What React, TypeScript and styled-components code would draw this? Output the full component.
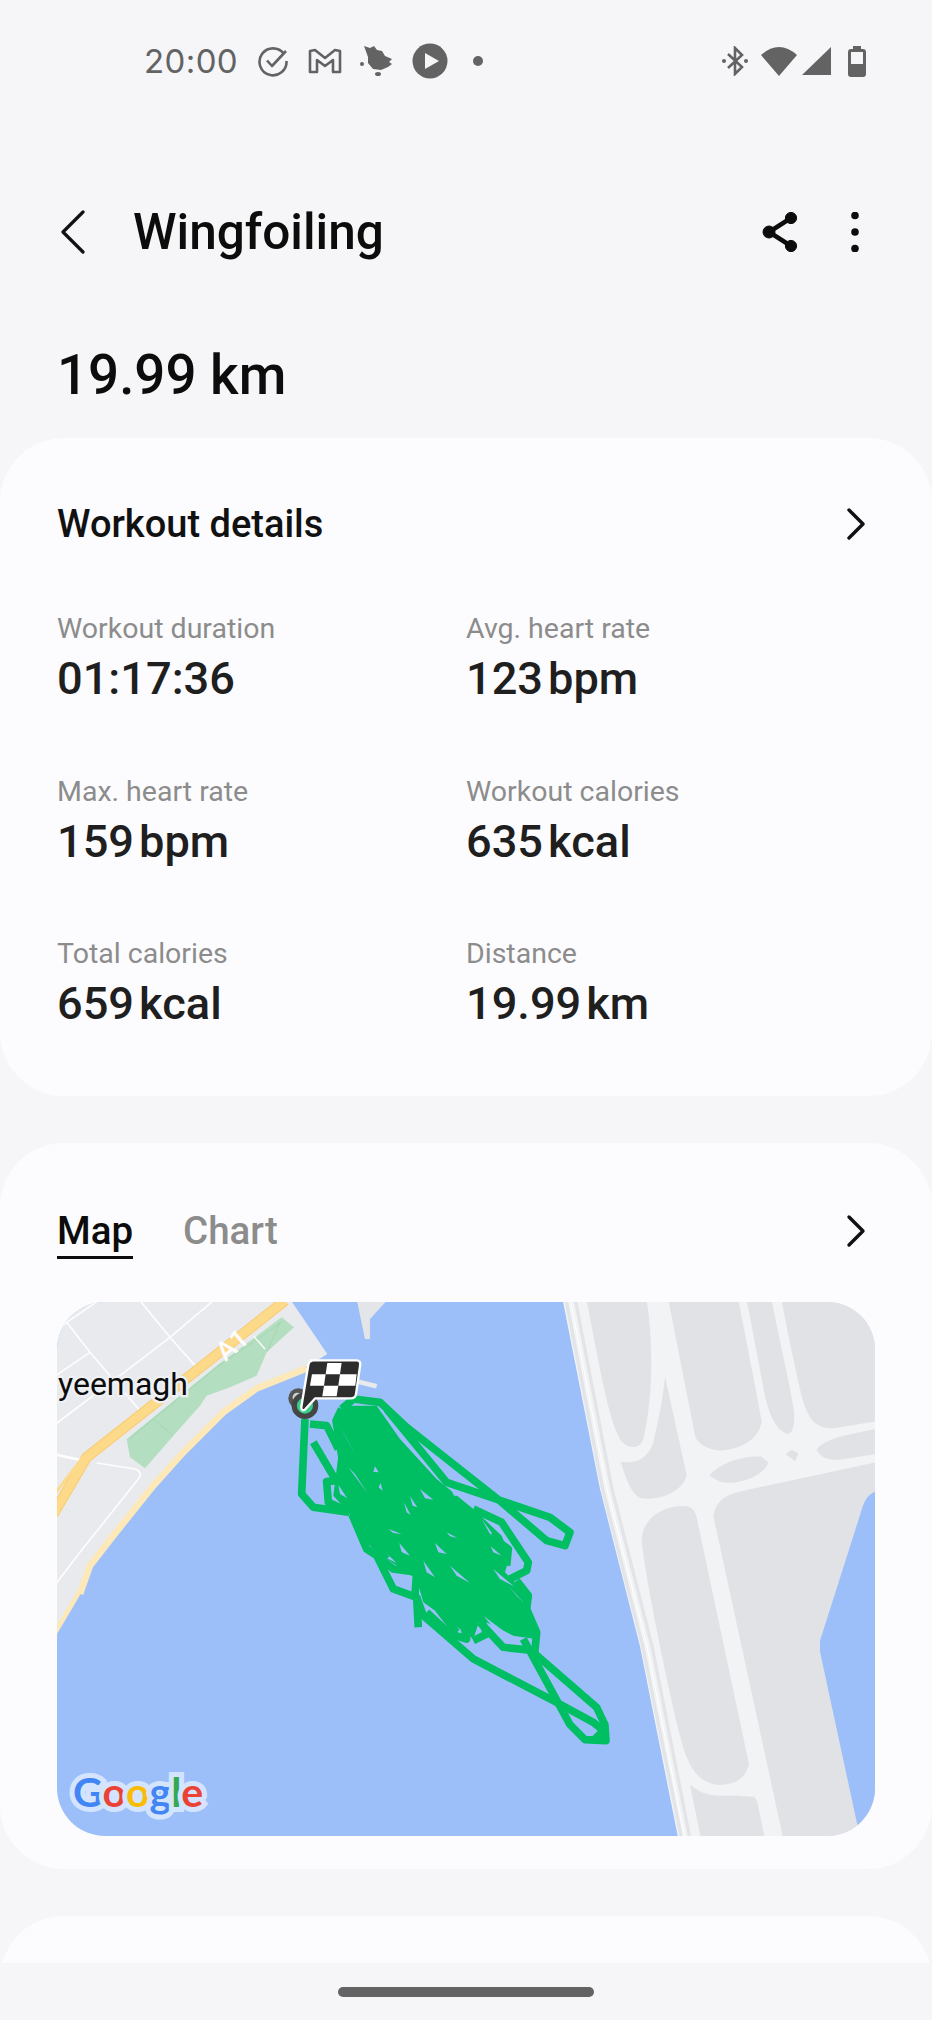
import React from "react";
import styled, { createGlobalStyle } from "styled-components";

const Global = createGlobalStyle`
  html, body { margin: 0; padding: 0; background: #f6f6f8; }
  body { font-family: Roboto, "Liberation Sans", sans-serif; }
`;

const Page = styled.div`
  width: 932px;
  height: 2020px;
  background: #f6f6f8;
  overflow: hidden;
  display: flex;
  flex-direction: column;
`;
const Scroll = styled.main`
  height: 1963px;
  overflow: hidden;
  flex: none;
`;
const StatusBar = styled.div`
  height: 122px;
  display: flex;
  align-items: center;
  justify-content: space-between;
  padding: 0 66px 0 144px;
  color: #636363;
`;
const StatusGroup = styled.div`
  display: flex;
  align-items: center;
`;
const Clock = styled.span`
  font-family: Inter, sans-serif;
  font-size: 33px;
  letter-spacing: 0.4px;
  color: #636363;
  margin-right: 19px;
`;
const Header = styled.header`
  margin-top: 68px;
  height: 84px;
  display: flex;
  align-items: center;
  padding: 0 72px 0 60px;
`;
const Title = styled.h1`
  margin: 0 0 0 47px;
  flex: 1;
  font-size: 49.5px;
  font-weight: 500;
  color: #0c0c0c;
`;
const HeaderActions = styled.div`
  display: flex;
  align-items: center;
  gap: 52px;
`;
const Distance = styled.div`
  margin: 69px 0 0 57px;
  height: 64px;
  line-height: 64px;
  font-size: 54.7px;
  font-weight: 500;
  color: #0c0c0c;
`;
const Card = styled.section<{ $h: number }>`
  background: #fcfcfe;
  border-radius: 64px;
  height: ${(p) => p.$h}px;
  padding: 0 57px;
  box-sizing: border-box;
  margin-top: 47px;
`;
const FirstCard = styled(Card)`
  margin-top: 31px;
`;
const CardHead = styled.div<{ $top: number }>`
  padding-top: ${(p) => p.$top}px;
  display: flex;
  align-items: center;
  justify-content: space-between;
  height: 50px;
  box-sizing: content-box;
`;
const ChevronSlot = styled.span`
  display: flex;
  margin-right: 7px;
`;
const CardTitle = styled.h2`
  margin: 0;
  font-size: 38px;
  font-weight: 500;
  color: #111;
`;
const Grid = styled.div`
  display: grid;
  grid-template-columns: 409px 1fr;
  grid-auto-rows: 162.5px;
  margin-top: 61px;
`;
const Stat = styled.div`
  display: flex;
  flex-direction: column;
`;
const Label = styled.div`
  font-size: 28.5px;
  line-height: 38px;
  color: #8c8c8c;
`;
const Value = styled.div`
  font-size: 45.2px;
  line-height: 56px;
  font-weight: 500;
  color: #1f1f1f;
  margin-top: 3px;
  display: flex;
  align-items: baseline;
  gap: 5px;
`;
const Tabs = styled.div`
  display: flex;
  gap: 50px;
  margin-top: 2px;
`;
const Tab = styled.span<{ $on?: boolean }>`
  font-size: 38.5px;
  font-weight: 500;
  line-height: 50px;
  color: ${(p) => (p.$on ? "#0c0c0c" : "#8c8c8c")};
  border-bottom: 3px solid ${(p) => (p.$on ? "#0c0c0c" : "transparent")};
`;
const MapBox = styled.div`
  position: relative;
  margin-top: 46px;
  width: 818px;
  height: 534px;
  border-radius: 48px;
  overflow: hidden;
  background: #9cbff9;
`;
const MapSvg = styled.svg`
  display: block;
`;
const GoogleMark = styled.div`
  position: absolute;
  left: 16px;
  bottom: 19px;
  font-family: Lato, sans-serif;
  font-size: 41px;
  line-height: 50px;
  font-weight: 700;
  -webkit-text-stroke: 10px #d5e4fd;
  paint-order: stroke fill;
`;
const Letter = styled.span<{ $c: string }>`
  color: ${(p) => p.$c};
`;
const NavBar = styled.div`
  flex: 1;
  display: flex;
  align-items: center;
  justify-content: center;
`;
const HomePill = styled.div`
  width: 256px;
  height: 10px;
  background: #636363;
  border-radius: 5px;
`;

const Chevron = () => (
  <ChevronSlot>
    <svg width="22" height="34" viewBox="0 0 22 34" fill="none">
      <path d="M3 3 L17 17 L3 31" stroke="#111" strokeWidth="3.4" strokeLinecap="round" strokeLinejoin="round" />
    </svg>
  </ChevronSlot>
);

const stats: [string, string, string][] = [
  ["Workout duration", "01:17:36", ""],
  ["Avg. heart rate", "123", "bpm"],
  ["Max. heart rate", "159", "bpm"],
  ["Workout calories", "635", "kcal"],
  ["Total calories", "659", "kcal"],
  ["Distance", "19.99", "km"],
];

const holes = [
  "245,270 285,345 260,300", "265,385 322,462 285,405", "345,382 356,400 340,398", "362,432 368,455 356,445",
  "465,300 520,410 480,350", "450,472 472,505 458,500", "480,450 520,482 495,478", "432,490 452,528 440,520",
  "345,610 410,672 365,650", "385,680 455,690 420,750 395,720", "418,612 450,650 425,640",
  "385,570 425,585 400,582", "525,612 560,645 535,640", "560,580 592,597 570,592", "570,680 630,732 590,710",
  "490,665 525,715 500,700", "692,622 725,650 700,640", "700,690 762,742 720,720",
  "745,740 795,795 770,770", "670,830 770,905 730,900", "520,820 580,880 535,850", "590,795 620,880 605,850",
  "235,438 262,478 240,465", "575,455 600,470 582,470",
  "665,540 720,615 690,585", "180,330 226,415 200,385",
  "155,275 195,270 225,335 190,300",
];

const track = [
  "135,240 125,465 160,505 265,520",
  "150,255 200,260 235,330",
  "160,310 228,425 200,428 205,490 270,520",
  "245,210 228,245 245,350 268,470",
  "245,210 280,180 360,190 440,265 725,490 860,605 915,620 930,580 870,535 560,430 380,210",
  "275,525 320,630 350,650 400,750 470,775 475,865",
  "470,775 490,830 640,960 880,1085 1000,1150 1030,1175 1000,1205",
  "790,900 930,1157 975,1202 1038,1205 1035,1158 1010,1105 820,940",
  "640,905 680,885 660,830",
  "660,850 730,925 825,935 830,880 800,810 805,770 770,725",
  "640,510 725,550 805,670 800,695 750,720",
  "690,590 745,630 740,680",
  "500,820 570,885 620,900 610,850 590,790",
  "350,650 400,690 470,700",
  "535,810 590,880",
  "745,820 830,880",
  "275,525 340,570 470,700 465,770",
  "300,570 380,660",
];

const MapDrawing = () => (
  <MapSvg width="818" height="534" viewBox="0 0 818 534">
    <g transform="translate(-17,-13) scale(0.3333)">
      <path d="M40,30 L750,30 L862,195 L790,240 L650,298 L550,370 L430,490 L340,590 L220,740 L150,830 L120,910 L40,1040 Z" fill="#e8eaed" />
      <path d="M800,238 L650,298 L550,370 L430,490 L340,590 L220,740 L150,830 L120,915" fill="none" stroke="#fce8b8" strokeWidth="20" />
      <path d="M40,1040 L120,905" fill="none" stroke="#fce8b8" strokeWidth="14" />
      <g fill="none" stroke="#fdfdfe" strokeWidth="5">
        <path d="M80,100 L150,190 L300,365" />
        <path d="M300,35 L390,145 L470,235" />
        <path d="M520,35 L390,145 L240,260 L40,410" />
        <path d="M150,190 L40,265" />
        <path d="M175,35 L80,100 L40,135" />
        <path d="M40,495 L130,515" strokeWidth="8" />
        <path d="M170,522 L285,540 Q310,550 295,570 L120,790 L40,895" />
      </g>
      <path d="M40,675 L140,505 L735,35" fill="none" stroke="#f9cb70" strokeWidth="32" />
      <path d="M40,675 L140,505 L735,35" fill="none" stroke="#fdd98a" strokeWidth="26" />
      <path d="M40,620 L125,510" fill="none" stroke="#fdd98a" strokeWidth="9" />
      <path d="M725,85 L762,115 L680,190 L650,260 L570,295 L500,320 L480,350 L400,440 L315,538 L270,505 L260,450 L530,230 Z" fill="#b3dfc0" />
      <path d="M725,100 L530,235 L340,390 L400,440 M340,390 L270,450 M680,190 L720,100" fill="none" stroke="#9dd0ad" strokeWidth="2" />
      <path d="M640,140 L675,180" stroke="#fdfdfe" strokeWidth="4" />
      <text x="0" y="0" transform="translate(556,220) rotate(-40)" fontFamily="Roboto, sans-serif" fontWeight="500" fontSize="80" fill="#fdfdfe">A1</text>
      <path d="M950,30 L975,150 L990,150 L990,90 L1045,30 Z" fill="#e3e5e8" />
      <path d="M955,278 L1010,292" stroke="#e8eaed" strokeWidth="14" />
      <text x="54" y="318" fontFamily="Roboto, sans-serif" fontSize="96" fill="#0c0c0c" stroke="#eef0f3" strokeWidth="14" paintOrder="stroke fill">yeemagh</text>
    </g>
    <g transform="translate(443,-13) scale(0.3333,0.35714)">
      <path d="M188,30 L300,560 L420,1000 L535,1540 L1130,1540 L1130,30 Z" fill="#f2f3f5" />
      <path d="M198,30 L308,560 L428,1000 L545,1540" fill="none" stroke="#e2e4e7" strokeWidth="10" />
      <path d="M211,30 L321,560 L441,1000 L555,1540" fill="none" stroke="#fff" strokeWidth="3" />
      <path d="M226,30 L336,560 L456,1000 L570,1540" fill="none" stroke="#e2e4e7" strokeWidth="10" />
      <g fill="#e0e2e5">
        <path d="M260,30 L440,30 C460,150 460,300 430,420 C420,450 380,450 360,420 C330,370 310,280 260,30 Z" />
        <path d="M495,245 L560,520 C550,570 470,595 420,585 C390,570 375,520 362,483 C420,495 450,460 460,430 C475,370 490,300 495,245 Z" />
        <path d="M505,30 L715,30 C740,150 770,290 785,370 C780,420 720,450 660,452 C620,450 590,430 585,410 Z" />
        <path d="M740,30 L815,30 C840,150 870,270 882,340 C885,380 880,400 865,407 C830,395 810,360 795,300 Z" />
        <path d="M845,30 L1130,30 L1130,370 L1000,390 C950,390 925,370 905,300 C880,200 860,110 845,30 Z" />
        <path d="M628,523 C660,485 740,465 785,470 L805,485 C790,530 700,550 660,540 Z" />
        <path d="M857,462 L875,450 L895,460 L885,482 Z" />
        <path d="M950,450 C970,420 1050,405 1130,392 L1130,462 L1020,478 C980,480 960,470 950,450 Z" />
        <path d="M640,635 C650,590 680,575 730,565 L1130,485 L1130,1540 L850,1540 Z" />
        <path d="M425,700 C430,640 490,605 560,608 C575,610 585,620 590,640 L747,1330 C735,1380 690,1390 650,1388 C590,1380 560,1330 540,1250 C500,1100 430,780 425,700 Z" />
        <path d="M570,1388 C610,1420 650,1420 700,1418 L760,1422 C770,1425 773,1440 775,1450 L795,1540 L603,1540 Z" />
      </g>
      <path d="M1130,565 C1105,575 1095,590 1088,610 L960,985 L960,1015 L1072,1500 L1130,1540 Z" fill="#9cbff9" />
    </g>
    <g transform="translate(203,37) scale(0.3333)">
      <polygon points="250,200 350,200 420,300 530,420 640,510 725,590 750,650 735,700 795,760 810,830 825,900 760,890 660,840 640,900 560,840 490,790 470,720 350,640 290,560 265,520 220,470 235,350 225,240" fill="#00bf63" />
      {holes.map((h) => (
        <polygon key={h} points={h} fill="#9cbff9" />
      ))}
      {track.map((t) => (
        <polyline key={t} points={t} fill="none" stroke="#00bf63" strokeWidth="23" strokeLinejoin="round" />
      ))}
    </g>
    <g transform="translate(-17,-13) scale(0.3333)">
      <circle cx="775" cy="328" r="30" fill="#555" />
      <circle cx="772" cy="325" r="14" fill="#cfd2d2" />
      <circle cx="795" cy="350" r="40" fill="#454545" />
      <circle cx="795" cy="350" r="24" fill="#35cf8a" />
      <path d="M812,214 L950,214 Q964,214 960,232 L948,316 Q946,328 932,328 L826,328 L795,362 Q784,368 784,354 L805,228 Q807,214 822,214 Z" fill="#2d2d2d" stroke="#fff" strokeWidth="7" strokeLinejoin="round" />
      <g fill="#fff">
        <polygon points="862,222 905,222 900,256 857,256" />
        <polygon points="816,256 857,256 852,290 810,290" />
        <polygon points="900,256 950,256 946,290 895,290" />
        <polygon points="852,290 895,290 890,322 847,322" />
      </g>
    </g>
  </MapSvg>
);

export default function App() {
  return (
    <Page>
      <Global />
      <Scroll>
        <StatusBar>
          <StatusGroup>
            <Clock>20:00</Clock>
            <svg width="32" height="32" viewBox="0 0 32 32" fill="none" stroke="#636363" strokeWidth="2.6">
              <path d="M27 9 A13.5 13.5 0 1 0 29.5 16" />
              <path d="M10 15.5 L15 21 L29 6" strokeLinejoin="round" />
            </svg>
            <svg style={{ marginLeft: 19 }} width="34" height="26" viewBox="0 0 34 26" fill="none" stroke="#636363" strokeWidth="2.6" strokeLinejoin="round">
              <path d="M2 3 L7 2 L17 10 L27 2 L32 3 L32 24 L25 24 L25 12 L17 18 L9 12 L9 24 L2 24 Z" />
            </svg>
            <svg style={{ marginLeft: 18 }} width="34" height="32" viewBox="0 0 34 32" fill="#636363">
              <path d="M4 1 L10 3 L14 1 L17 5 L22 6 L25 11 L32 14 L29 17 L32 19 L28 22 L21 25 L13 24 L8 18 L8 12 Z" />
              <circle cx="2" cy="19" r="2" />
              <ellipse cx="18" cy="29" rx="3" ry="2" />
            </svg>
            <svg style={{ marginLeft: 18 }} width="36" height="36" viewBox="0 0 36 36">
              <circle cx="18" cy="18" r="17.5" fill="#636363" />
              <path d="M13 10 L27 18 L13 26 Z" fill="#f6f6f8" />
            </svg>
            <svg style={{ marginLeft: 25 }} width="10" height="10" viewBox="0 0 10 10">
              <circle cx="5" cy="5" r="5" fill="#636363" />
            </svg>
          </StatusGroup>
          <StatusGroup>
            <svg width="26" height="30" viewBox="0 0 26 30" fill="none" stroke="#636363" strokeWidth="2.6">
              <path d="M6 8 L20 21 L13 28 L13 2 L20 9 L6 22" />
              <circle cx="2" cy="15" r="2" fill="#636363" stroke="none" />
              <circle cx="24" cy="15" r="2" fill="#636363" stroke="none" />
            </svg>
            <svg style={{ marginLeft: 13 }} width="36" height="30" viewBox="0 0 36 30" fill="#636363">
              <path d="M0 9 Q18 -7 36 9 L18 30 Z" />
            </svg>
            <svg style={{ marginLeft: 4 }} width="30" height="30" viewBox="0 0 30 30" fill="#636363">
              <path d="M30 1 L30 29 L1 29 Z" />
            </svg>
            <svg style={{ marginLeft: 17 }} width="18" height="31" viewBox="0 0 18 31">
              <path d="M5 0 H13 V3 H15 Q18 3 18 6 V28 Q18 31 15 31 H3 Q0 31 0 28 V6 Q0 3 3 3 H5 Z" fill="#636363" />
              <rect x="3" y="6" width="12" height="12" fill="#f6f6f8" />
            </svg>
          </StatusGroup>
        </StatusBar>
        <Header>
          <svg width="26" height="44" viewBox="0 0 26 44" fill="none">
            <path d="M23 2 L3 22 L23 42" stroke="#111" strokeWidth="3.2" strokeLinecap="round" strokeLinejoin="round" />
          </svg>
          <Title>Wingfoiling</Title>
          <HeaderActions>
            <svg width="36" height="40" viewBox="0 0 36 40" fill="#0c0c0c" stroke="#0c0c0c">
              <path d="M29 6 L7 20 L29 34" fill="none" strokeWidth="4.5" />
              <circle cx="29" cy="6" r="5.6" />
              <circle cx="7" cy="20" r="6" />
              <circle cx="29" cy="34" r="5.6" />
            </svg>
            <svg width="10" height="40" viewBox="0 0 10 40" fill="#0c0c0c">
              <circle cx="5" cy="3.5" r="3.8" />
              <circle cx="5" cy="20" r="3.8" />
              <circle cx="5" cy="36.5" r="3.8" />
            </svg>
          </HeaderActions>
        </Header>
        <Distance>19.99 km</Distance>
        <FirstCard $h={658}>
          <CardHead $top={61}>
            <CardTitle>Workout details</CardTitle>
            <Chevron />
          </CardHead>
          <Grid>
            {stats.map(([l, v, u]) => (
              <Stat key={l}>
                <Label>{l}</Label>
                <Value>
                  <span>{v}</span>
                  {u && <span>{u}</span>}
                </Value>
              </Stat>
            ))}
          </Grid>
        </FirstCard>
        <Card $h={726}>
          <CardHead $top={63}>
            <Tabs>
              <Tab $on>Map</Tab>
              <Tab>Chart</Tab>
            </Tabs>
            <Chevron />
          </CardHead>
          <MapBox>
            <MapDrawing />
            <GoogleMark>
              <Letter $c="#4285f4">G</Letter>
              <Letter $c="#ea4335">o</Letter>
              <Letter $c="#fbbc05">o</Letter>
              <Letter $c="#4285f4">g</Letter>
              <Letter $c="#34a853">l</Letter>
              <Letter $c="#ea4335">e</Letter>
            </GoogleMark>
          </MapBox>
        </Card>
        <Card $h={200} />
      </Scroll>
      <NavBar>
        <HomePill />
      </NavBar>
    </Page>
  );
}
